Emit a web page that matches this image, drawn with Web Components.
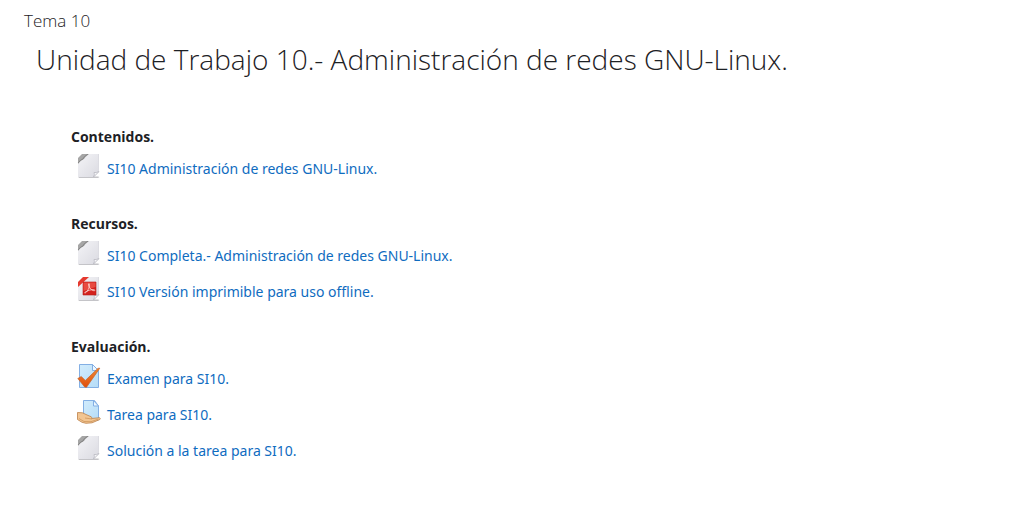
<!DOCTYPE html>
<html lang="es">
<head>
<meta charset="utf-8">
<title>Tema 10</title>
<style>
body { margin: 0; background: #fff; color: #1d2125; font-family: "Segoe UI", "Open Sans", "Noto Sans", sans-serif; font-size: 14px; }
</style>
</head>
<body>
<course-topic name="Tema 10" heading="Unidad de Trabajo 10.- Administración de redes GNU-Linux.">
  <activity-group heading="Contenidos.">
    <activity-item icon="page">SI10 Administración de redes GNU-Linux.</activity-item>
  </activity-group>
  <activity-group heading="Recursos.">
    <activity-item icon="page">SI10 Completa.- Administración de redes GNU-Linux.</activity-item>
    <activity-item icon="pdf">SI10 Versión imprimible para uso offline.</activity-item>
  </activity-group>
  <activity-group heading="Evaluación.">
    <activity-item icon="quiz">Examen para SI10.</activity-item>
    <activity-item icon="task">Tarea para SI10.</activity-item>
    <activity-item icon="page">Solución a la tarea para SI10.</activity-item>
  </activity-group>
</course-topic>

<script>
const sheet = `
  <path d="M1 22.500h20l1.500.5-1.500 1H2z" fill="#c4c4c8"/>
  <path d="M1 0h21v18l-5 5H1z" fill="url(#paper)"/>
  <path d="M21.500 0v18" fill="none" stroke="#dcdce2"/>
  <path d="M22 17.500q-3 1.500-5 1 1 2-.5 4.500z" fill="#f6f6f9" stroke="#b5b5bd" stroke-width=".7"/>`;
const paper = `<linearGradient id="paper" x1="0" y1="0" x2="1" y2="1"><stop stop-color="#f4f4f7"/><stop offset="1" stop-color="#dadae1"/></linearGradient>`;
const blue = `<linearGradient id="blue" x1="0" y1="0" x2="1" y2="1"><stop stop-color="#d2ecfc"/><stop offset="1" stop-color="#b5dcf7"/></linearGradient>`;

const icons = {
  page: `<defs>${paper}</defs>${sheet}
    <path d="M1 0h11Q8 3 7 5 4 6 1 10z" fill="#a6a6a6"/>
    <path d="M1 0h4L1 4z" fill="#fff"/><path d="M1 9q3-4 5-4 0-2 5-5" fill="none" stroke="#858585"/>`,
  pdf: `<defs>${paper}</defs>${sheet}
    <path d="M1 0h11L1 10z" fill="#e5392f"/><path d="M1 0h5L1 5z" fill="#fff"/>
    <path d="M6 5h13v13H6z" fill="#d3211d" stroke="#b51b18" stroke-width=".6"/>
    <path d="M6.500 5.500h12V10l-12 4z" fill="#e84a40"/>
    <path transform="translate(0 1)" d="M8 15c2-.5 4.500-5 4.500-8.500 0-1.500-1.500-1.200-1 .5.700 3 3 5.500 5.500 5.800 1.500 0 1-1.300-.8-1.200-2.700.1-5 .8-7.500 2.200-1 .7-1.500 1.200-.7 1.200z" fill="none" stroke="#ffd9d4" stroke-width=".8"/>`,
  quiz: `<defs>${blue}<linearGradient id="tick" x1="0" y1="0" x2="0" y2="1"><stop stop-color="#ee8a36"/><stop offset="1" stop-color="#df4d0c"/></linearGradient></defs>
    <path d="M2.500.5h13l6 6v17h-19z" fill="url(#blue)" stroke="#83afe4"/>
    <path d="M15.500.5v6h6z" fill="#edf8ff" stroke="#83afe4"/>
    <path d="M.8 14.500l3.500-2 4 4L21 4.300l1.800-.1L9.500 23.300 7.700 23z" fill="url(#tick)" stroke="#c5642d" stroke-width=".7"/>`,
  task: `<defs>${blue}</defs>
    <path d="M6.500.5h11l4 5.500v14h-15z" fill="url(#blue)" stroke="#83afe4"/>
    <path d="M16.500.5v5.500h5z" fill="#edf8ff" stroke="#83afe4"/>
    <path d="M.5 12.500l5 .3 3.500 1.700 5 2.200q1.500.8.5 1.800l8-.8q1.500.6.300 1.800L15 22.800l-6 .5-4-1-4.500-2.800z" fill="#f2c592" stroke="#bd8048" stroke-width=".8"/>
    <path d="M8 18l7 1M2 18.500l5 3 7 .2 7-2.500" fill="none" stroke="#d29b61" stroke-width=".9"/>`
};

customElements.define("course-topic", class extends HTMLElement {
  connectedCallback() {
    const root = this.attachShadow({ mode: "open" });
    root.innerHTML = `
      <style>
        :host { display: block; padding: 8px 24px 24px; }
        h2, h3 { margin: 0; font-weight: 300; }
        h2 { font-size: 17px; line-height: 26px; }
        h3 { font-size: 28px; line-height: 36px; padding: 7px 12px 0; }
        .groups { display: flex; flex-direction: column; gap: 26px; padding: 48px 47px 0; }
      </style>
      <h2></h2><h3></h3>
      <div class="groups"><slot></slot></div>`;
    root.querySelector("h2").textContent = this.getAttribute("name");
    root.querySelector("h3").textContent = this.getAttribute("heading");
  }
});

customElements.define("activity-group", class extends HTMLElement {
  connectedCallback() {
    const root = this.attachShadow({ mode: "open" });
    root.innerHTML = `
      <style>
        :host { display: block; }
        h4 { margin: 0; font-size: 14px; line-height: 24px; font-weight: 700; }
        .items { padding: 1px 0 0 6px; }
      </style>
      <h4></h4>
      <div class="items" role="list"><slot></slot></div>`;
    root.querySelector("h4").textContent = this.getAttribute("heading");
  }
});

customElements.define("activity-item", class extends HTMLElement {
  connectedCallback() {
    this.setAttribute("role", "listitem");
    this.attachShadow({ mode: "open" }).innerHTML = `
      <style>
        :host { display: block; padding: 4px 0 2px; }
        a { display: flex; width: fit-content; gap: 6px; color: #0f6cbf; text-decoration: none; font-family: "Segoe UI", "Noto Sans", "Open Sans", sans-serif; line-height: 30px; }
        a:hover { text-decoration: underline; }
        svg { flex: none; width: 24px; height: 24px; }
      </style>
      <a href="#"><svg viewBox="0 0 24 24" aria-hidden="true">${icons[this.getAttribute("icon")]}</svg><span><slot></slot></span></a>`;
  }
});
</script>
</body>
</html>
